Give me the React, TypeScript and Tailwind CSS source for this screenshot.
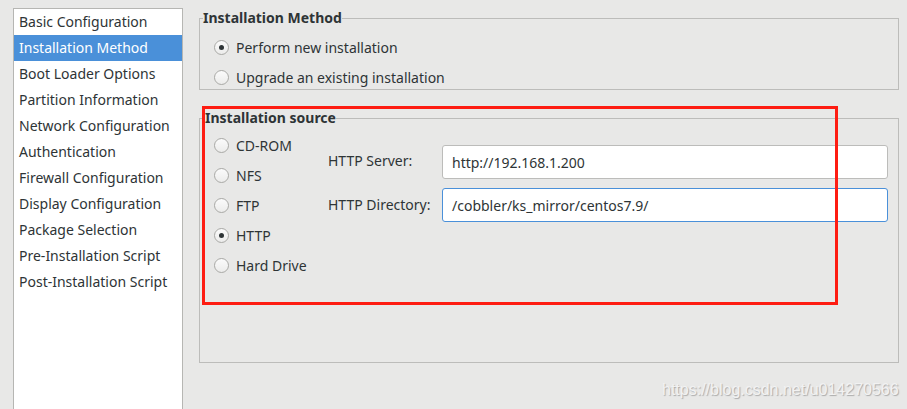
import React from 'react';

const NAV_ITEMS = [
  'Basic Configuration',
  'Installation Method',
  'Boot Loader Options',
  'Partition Information',
  'Network Configuration',
  'Authentication',
  'Firewall Configuration',
  'Display Configuration',
  'Package Selection',
  'Pre-Installation Script',
  'Post-Installation Script',
];

const SOURCES = ['CD-ROM', 'NFS', 'FTP', 'HTTP', 'Hard Drive'];

function Radio({ label, checked }: { label: string; checked?: boolean }) {
  return (
    <div className="flex items-center h-[20px] gap-[7px]">
      <span className="w-[15px] h-[15px] rounded-full border border-[#a9a9a6] bg-gradient-to-b from-[#fbfbfb] to-[#ececeb] flex items-center justify-center shrink-0">
        {checked && <span className="w-[5px] h-[5px] rounded-full bg-[#2e3436]" />}
      </span>
      <span>{label}</span>
    </div>
  );
}

export default function App() {
  return (
    <div
      className="relative w-[907px] h-[409px] overflow-hidden bg-[#e8e8e7] flex items-start text-[14px] text-[#2e3436]"
      style={{ fontFamily: '"Noto Sans", "DejaVu Sans", sans-serif' }}
    >
      {/* side list */}
      <div className="ml-[13px] mt-[8px] w-[170px] h-[420px] bg-white border border-[#b6b6b3] flex flex-col">
        {NAV_ITEMS.map((item, i) => (
          <div
            key={item}
            className={`h-[26px] pl-[5px] pb-[2px] flex items-center ${i === 1 ? 'bg-[#4a90d9] text-white' : ''}`}
          >
            {item}
          </div>
        ))}
      </div>

      <div className="ml-[16px] pt-[9px] w-[700px] flex flex-col gap-[19px]">
        <fieldset className="h-[81px] border border-[#bcbcba] px-0">
          <legend className="ml-[3px] h-[18px] leading-[18px] font-bold">Installation Method</legend>
          <div className="pt-[10px] pl-[14px] flex flex-col gap-[10px]">
            <Radio label="Perform new installation" checked />
            <Radio label="Upgrade an existing installation" />
          </div>
        </fieldset>

        <fieldset className="h-[254px] border border-[#bcbcba] px-0">
          <legend className="ml-[5px] h-[18px] leading-[18px] font-bold">Installation source</legend>
          <div className="flex items-start">
            <div className="w-[128px] pt-[8px] pl-[14px] flex flex-col gap-[10px]">
              {SOURCES.map((s) => (
                <Radio key={s} label={s} checked={s === 'HTTP'} />
              ))}
            </div>
            <div className="flex-1 pt-[18px] pr-[10px] grid grid-cols-[114px_1fr] content-start gap-y-[9px] items-center">
              <span className="-mt-[4px]">HTTP Server:</span>
              <div className="h-[34px] bg-white border border-[#bcbcba] rounded-[3px] pl-[9px] flex items-center">
                http://192.168.1.200
              </div>
              <span className="-mt-[2px]">HTTP Directory:</span>
              <div className="h-[34px] bg-white border border-[#4a90d9] rounded-[3px] pl-[9px] flex items-center">
                /cobbler/ks_mirror/centos7.9/
              </div>
            </div>
          </div>
        </fieldset>
      </div>

      {/* annotation box */}
      <div className="absolute left-[202px] top-[106px] w-[636px] h-[199px] border-[3px] border-[#fe1c12]" />

      {/* watermark */}
      <div
        className="absolute left-[662px] top-[378px] text-[16px] text-[#f2f2f2] [text-shadow:1px_1px_1px_#aaaaaa]"
        style={{ fontFamily: '"Liberation Sans", Arial, sans-serif' }}
      >
        https://blog.csdn.net/u014270566
      </div>
    </div>
  );
}
